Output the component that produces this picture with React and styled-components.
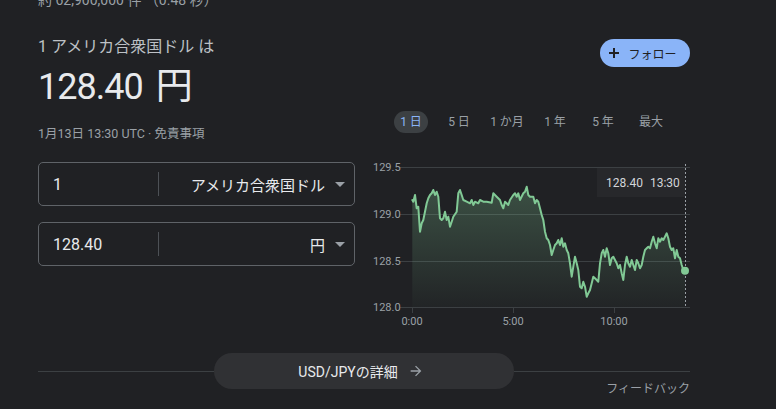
import React from 'react';
import styled, { createGlobalStyle } from 'styled-components';

const Global = createGlobalStyle`
  html, body { margin: 0; padding: 0; background: #202124; }
  body {
    font-family: Roboto, Arial, "Noto Sans CJK JP", sans-serif;
    color: #bdc1c6;
    overflow: hidden;
  }
`;

const Page = styled.div`
  width: 652px;
  padding-left: 38px;
`;

const Stats = styled.div`
  margin-top: -10px;
  height: 20px;
  line-height: 20px;
  font-size: 14px;
  color: #9aa0a6;
  white-space: nowrap;
`;

const Grid = styled.div`
  display: grid;
  grid-template-columns: 317px 317px;
  column-gap: 18px;
  row-gap: 16px;
  margin-top: 25px;
`;

const Summary = styled.div`
  display: flex;
  flex-direction: column;
`;

const Title = styled.div`
  font-size: 16px;
  line-height: 24px;
  color: #bdc1c6;
`;

const Price = styled.div`
  margin-top: 4px;
  font-size: 36px;
  letter-spacing: -1px;
  line-height: 48px;
  color: #e8eaed;
  display: flex;
  gap: 13px;
  align-items: baseline;
`;

const Unit = styled.span`
  font-size: 37px;
  letter-spacing: 0;
`;

const DateLine = styled.div`
  margin-top: 15px;
  font-size: 12.5px;
  line-height: 16px;
  color: #9aa0a6;
`;

const Controls = styled.div`
  display: flex;
  flex-direction: column;
  align-items: flex-end;
`;

const FollowButton = styled.button`
  margin-top: 4px;
  height: 28px;
  width: 90px;
  border: none;
  border-radius: 14px;
  background: #8ab4f8;
  color: #202124;
  display: flex;
  align-items: center;
  justify-content: center;
  gap: 9px;
  padding: 0 4px 0 0;
  font-family: inherit;
  font-size: 12px;
`;

const Tabs = styled.div`
  align-self: flex-start;
  margin-top: 44px;
  margin-left: 14px;
  display: flex;
`;

const TabCell = styled.div`
  width: 48px;
  display: flex;
  justify-content: center;
`;

const Tab = styled.span`
  height: 22px;
  line-height: 22px;
  padding: 0 6px;
  border-radius: 11px;
  font-size: 12px;
  white-space: nowrap;
  color: ${p => (p.$active ? '#8ab4f8' : '#9aa0a6')};
  background: ${p => (p.$active ? '#3c4043' : 'transparent')};
`;

const Form = styled.div`
  padding-top: 4px;
  display: flex;
  flex-direction: column;
  gap: 16px;
`;

const Field = styled.div`
  box-sizing: border-box;
  height: 44px;
  border: 1px solid #5f6368;
  border-radius: 5px;
  display: flex;
  align-items: center;
`;

const Amount = styled.div`
  width: 119px;
  box-sizing: border-box;
  padding-left: 14px;
  font-size: 16px;
  color: #e8eaed;
`;

const Divider = styled.div`
  width: 1px;
  height: 24px;
  background: #4d5156;
`;

const Currency = styled.div`
  flex: 1;
  display: flex;
  justify-content: flex-end;
  align-items: center;
  gap: 10px;
  padding-right: 9px;
  font-size: 15px;
  color: #e8eaed;
`;

const Caret = styled.span`
  width: 0;
  height: 0;
  border-left: 5px solid transparent;
  border-right: 5px solid transparent;
  border-top: 5px solid #9aa0a6;
`;

const ChartBox = styled.div`
  position: relative;
  height: 172px;
`;

const Tooltip = styled.div`
  position: absolute;
  left: 224px;
  top: 10px;
  width: 88px;
  height: 29px;
  box-sizing: border-box;
  padding-left: 9px;
  background: #27282b;
  display: flex;
  align-items: center;
  gap: 7px;
  font-size: 12px;
  color: #d2d5d9;
`;

const DetailRow = styled.div`
  margin-top: 23px;
  display: flex;
  align-items: center;
  height: 36px;
`;

const Rule = styled.div`
  flex: 1;
  height: 1px;
  background: #3c4043;
`;

const DetailButton = styled.button`
  width: 300px;
  height: 36px;
  border: none;
  border-radius: 18px;
  background: #303134;
  color: #e8eaed;
  font-family: inherit;
  font-size: 14px;
  display: flex;
  align-items: center;
  justify-content: center;
  gap: 10px;
  padding: 0 6px 0 0;
`;

const Feedback = styled.div`
  margin-top: -8px;
  text-align: right;
  font-size: 12px;
  line-height: 16px;
  color: #9aa0a6;
`;

const RAW = `157,150 160,155 165,135 170,175 175,170 180,245 185,220 190,210 200,160 205,145 210,135 215,130 220,120 225,135 230,125 235,140 240,205 245,210 250,205 255,185 260,210 265,200 270,230 275,215 280,200 290,185 295,130 300,120 305,135 310,150 320,155 330,160 335,150 340,165 345,155 355,160 360,150 370,155 380,155 395,158 400,130 410,140 420,150 425,165 430,175 435,155 440,160 445,165 450,150 460,135 465,130 470,140 475,130 480,150 490,130 495,125 500,110 505,135 510,140 520,140 525,160 530,150 535,155 540,175 545,195 550,210 555,245 560,265 565,270 570,285 575,315 580,300 585,285 590,280 595,270 600,285 605,265 610,290 615,280 620,300 625,310 630,340 635,380 640,350 645,320 650,340 655,360 660,410 665,415 670,395 675,410 680,440 685,430 690,420 695,400 700,380 705,385 710,390 715,395 720,340 725,310 730,300 735,320 740,295 745,310 750,345 755,325 760,320 765,330 770,340 775,355 780,345 785,370 790,390 795,345 800,320 805,340 810,350 815,330 820,345 825,360 830,330 835,340 840,355 845,345 850,320 855,300 860,295 865,290 870,295 875,275 880,260 885,280 890,295 895,265 900,275 905,265 910,270 915,260 920,250 925,265 930,290 935,300 940,295 945,325 950,300 955,320 960,325 965,345 970,360 975,362`;

const POINTS = RAW.split(' ').map(s => {
  const [a, b] = s.split(',').map(Number);
  return [a / 3 - 13, b / 3 - 8];
});

const linePath = POINTS.map((p, i) => `${i ? 'L' : 'M'}${p[0].toFixed(1)},${p[1].toFixed(1)}`).join(' ');
const first = POINTS[0];
const last = POINTS[POINTS.length - 1];
const areaPath = `M${first[0].toFixed(1)},149 ${linePath.replace('M', 'L')} L${last[0].toFixed(1)},149 Z`;

const gridY = [
  { label: '129.5', y: 9 },
  { label: '129.0', y: 56 },
  { label: '128.5', y: 103 },
  { label: '128.0', y: 149 },
];
const ticks = [
  { label: '0:00', x: 39 },
  { label: '5:00', x: 140 },
  { label: '10:00', x: 241 },
];

function Chart() {
  return (
    <svg width="317" height="172" viewBox="0 0 317 172" style={{ display: 'block' }}>
      <defs>
        <linearGradient id="fillG" x1="0" y1="0" x2="0" y2="1">
          <stop offset="0" stopColor="#81c995" stopOpacity="0.28" />
          <stop offset="1" stopColor="#81c995" stopOpacity="0.02" />
        </linearGradient>
      </defs>
      {gridY.map(g => (
        <g key={g.label}>
          <line x1="27" x2="317" y1={g.y + 0.5} y2={g.y + 0.5} stroke="#3c4043" strokeWidth="1" />
          <text x="0" y={g.y + 4} fontSize="11" fill="#9aa0a6" fontFamily="Roboto, Arial, sans-serif">{g.label}</text>
        </g>
      ))}
      {ticks.map(t => (
        <g key={t.label}>
          <line x1={t.x + 0.5} x2={t.x + 0.5} y1="149" y2="155" stroke="#3c4043" strokeWidth="1" />
          <text x={t.x} y="167" fontSize="11" textAnchor="middle" fill="#9aa0a6" fontFamily="Roboto, Arial, sans-serif">{t.label}</text>
        </g>
      ))}
      <path d={areaPath} fill="url(#fillG)" />
      <path d={linePath} fill="none" stroke="#81c995" strokeWidth="2" strokeLinejoin="round" strokeLinecap="round" />
      <line x1="312.5" x2="312.5" y1="6" y2="149" stroke="#9aa0a6" strokeWidth="1" strokeDasharray="2 2" />
      <circle cx={last[0]} cy={last[1]} r="4" fill="#81c995" />
    </svg>
  );
}

function PlusIcon() {
  return (
    <svg width="10" height="10" viewBox="0 0 10 10">
      <path d="M5 0v10M0 5h10" stroke="#202124" strokeWidth="2" />
    </svg>
  );
}

function ArrowIcon() {
  return (
    <svg width="16" height="16" viewBox="0 0 24 24">
      <path d="M12 4l-1.41 1.41L16.17 11H4v2h12.17l-5.58 5.59L12 20l8-8z" fill="#9aa0a6" />
    </svg>
  );
}

const tabs = ['1 日', '5 日', '1 か月', '1 年', '5 年', '最大'];

export default function App() {
  return (
    <>
      <Global />
      <Page>
        <Stats>約 62,900,000 件 （0.48 秒）</Stats>
        <Grid>
          <Summary>
            <Title>1 アメリカ合衆国ドル は</Title>
            <Price>
              <span>128.40</span>
              <Unit>円</Unit>
            </Price>
            <DateLine>1月13日 13:30 UTC · 免責事項</DateLine>
          </Summary>
          <Controls>
            <FollowButton>
              <PlusIcon />
              <span>フォロー</span>
            </FollowButton>
            <Tabs>
              {tabs.map((t, i) => (
                <TabCell key={t}>
                  <Tab $active={i === 0}>{t}</Tab>
                </TabCell>
              ))}
            </Tabs>
          </Controls>
          <Form>
            <Field>
              <Amount>1</Amount>
              <Divider />
              <Currency>
                <span>アメリカ合衆国ドル</span>
                <Caret />
              </Currency>
            </Field>
            <Field>
              <Amount>128.40</Amount>
              <Divider />
              <Currency>
                <span>円</span>
                <Caret />
              </Currency>
            </Field>
          </Form>
          <ChartBox>
            <Chart />
            <Tooltip>
              <span>128.40</span>
              <span>13:30</span>
            </Tooltip>
          </ChartBox>
        </Grid>
        <DetailRow>
          <Rule />
          <DetailButton>
            <span>USD/JPYの詳細</span>
            <ArrowIcon />
          </DetailButton>
          <Rule />
        </DetailRow>
        <Feedback>フィードバック</Feedback>
      </Page>
    </>
  );
}
